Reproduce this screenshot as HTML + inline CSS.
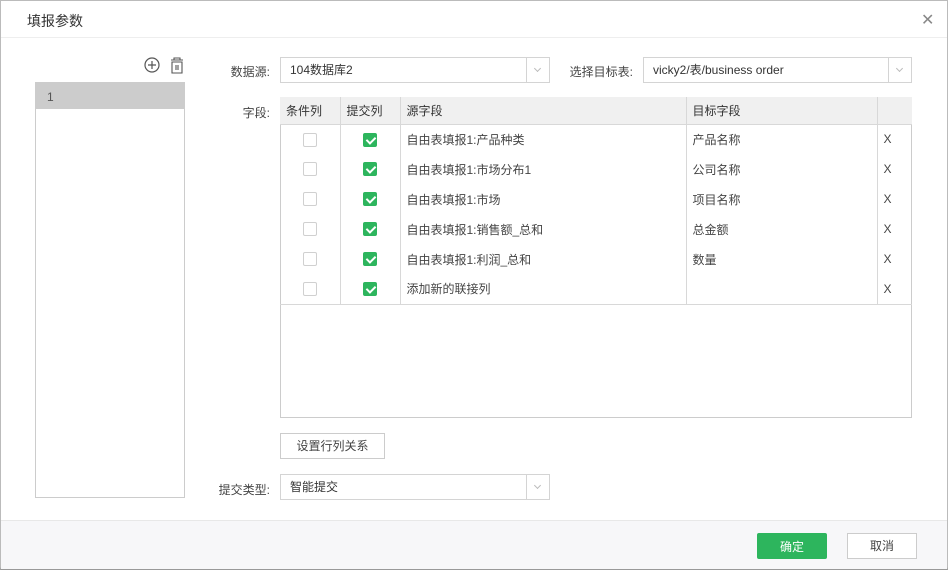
<!DOCTYPE html>
<html><head><meta charset="utf-8"><style>
*{box-sizing:border-box;margin:0;padding:0}
body{width:948px;height:572px;background:#fff;font-family:"Liberation Sans","Noto Sans CJK SC",sans-serif;font-size:12px;color:#444;position:relative;overflow:hidden}
.a{position:absolute}
.dlg{left:0;top:0;width:948px;height:570px;border:1px solid #bbb;border-bottom:3px solid #999}
.title{left:27px;top:11px;font-size:14px;color:#333}
.sel{border:1px solid #d4d4d4;background:#fff;height:26px;line-height:24px;padding-left:9px;color:#333}
.sel .ar{position:absolute;right:0;top:0;width:23px;height:24px;border-left:1px solid #d4d4d4}
.sel .ar:after{content:"";position:absolute;left:8px;top:8px;width:4px;height:4px;border-right:1px solid #bbb;border-bottom:1px solid #bbb;transform:rotate(45deg)}
.lbl{text-align:right;color:#444}
table{border-collapse:collapse;position:absolute;left:280px;top:97px;width:632px}
td,th{border-right:1px solid #d8d8d8;height:30px;text-align:left;padding-left:6px;font-weight:normal}
th{height:27px;background:#f0f0f0;border-bottom:1px solid #d8d8d8;color:#333}
.cb{display:inline-block;width:14px;height:14px;border:1px solid #d0d0d0;border-radius:2px;vertical-align:middle}
.ck{background:#2db55d;border-color:#2db55d;position:relative}
.ck:after{content:"";position:absolute;left:4px;top:1px;width:4px;height:7px;border-right:2px solid #fff;border-bottom:2px solid #fff;transform:rotate(45deg)}
.btn{border:1px solid #ccc;text-align:center;background:#fff}
</style></head><body>
<div class="a dlg"></div>
<div class="a title">填报参数</div>
<div class="a" style="left:921px;top:10px;font-size:16px;color:#888">✕</div>
<div class="a" style="left:1px;top:37px;width:946px;height:1px;background:#eee"></div>
<svg class="a" style="left:144px;top:57px" width="44" height="18"><circle cx="8" cy="8" r="7" fill="none" stroke="#555" stroke-width="1.2"/><path d="M8 4v8M4 8h8" stroke="#555" stroke-width="1.2"/><path d="M27 3h12M30 3v-2h6v2M28 5h10v11h-10z M32 8v5M34 8v5" fill="none" stroke="#555" stroke-width="1.1"/></svg>
<div class="a" style="left:35px;top:82px;width:150px;height:416px;border:1px solid #ccc"></div>
<div class="a" style="left:36px;top:83px;width:148px;height:26px;background:#ccc;padding:7px 0 0 11px;color:#555">1</div>
<div class="a lbl" style="left:200px;top:63px;width:70px">数据源:</div>
<div class="a sel" style="left:280px;top:57px;width:270px">104数据库2<div class="ar"></div></div>
<div class="a lbl" style="left:560px;top:63px;width:73px">选择目标表:</div>
<div class="a sel" style="left:643px;top:57px;width:269px">vicky2/表/business order<div class="ar"></div></div>
<div class="a lbl" style="left:200px;top:104px;width:70px">字段:</div>
<div class="a" style="left:280px;top:97px;width:632px;height:321px;border:1px solid #ccc"></div>
<table>
<tr><th style="width:60px">条件列</th><th style="width:60px">提交列</th><th style="width:286px">源字段</th><th style="width:191px">目标字段</th><th style="border-right:none"></th></tr>
<tr><td style="text-align:center;padding:0"><span class="cb"></span></td><td style="text-align:center;padding:0"><span class="cb ck"></span></td><td>自由表填报1:产品种类</td><td>产品名称</td><td style="border:none">X</td></tr>
<tr><td style="text-align:center;padding:0"><span class="cb"></span></td><td style="text-align:center;padding:0"><span class="cb ck"></span></td><td>自由表填报1:市场分布1</td><td>公司名称</td><td style="border:none">X</td></tr>
<tr><td style="text-align:center;padding:0"><span class="cb"></span></td><td style="text-align:center;padding:0"><span class="cb ck"></span></td><td>自由表填报1:市场</td><td>项目名称</td><td style="border:none">X</td></tr>
<tr><td style="text-align:center;padding:0"><span class="cb"></span></td><td style="text-align:center;padding:0"><span class="cb ck"></span></td><td>自由表填报1:销售额_总和</td><td>总金额</td><td style="border:none">X</td></tr>
<tr><td style="text-align:center;padding:0"><span class="cb"></span></td><td style="text-align:center;padding:0"><span class="cb ck"></span></td><td>自由表填报1:利润_总和</td><td>数量</td><td style="border:none">X</td></tr>
<tr style="border-bottom:1px solid #d8d8d8"><td style="text-align:center;padding:0"><span class="cb"></span></td><td style="text-align:center;padding:0"><span class="cb ck"></span></td><td>添加新的联接列</td><td></td><td style="border:none">X</td></tr>
</table>
<div class="a btn" style="left:280px;top:433px;width:105px;height:26px;line-height:24px">设置行列关系</div>
<div class="a lbl" style="left:200px;top:481px;width:70px">提交类型:</div>
<div class="a sel" style="left:280px;top:474px;width:270px">智能提交<div class="ar"></div></div>
<div class="a" style="left:1px;top:520px;width:946px;height:49px;background:#f7f7f9;border-top:1px solid #e8e8e8"></div>
<div class="a btn" style="left:757px;top:533px;width:70px;height:26px;line-height:26px;background:#2db55d;border-color:#2db55d;color:#fff;border-radius:2px">确定</div>
<div class="a btn" style="left:847px;top:533px;width:70px;height:26px;line-height:24px">取消</div>
</body></html>
